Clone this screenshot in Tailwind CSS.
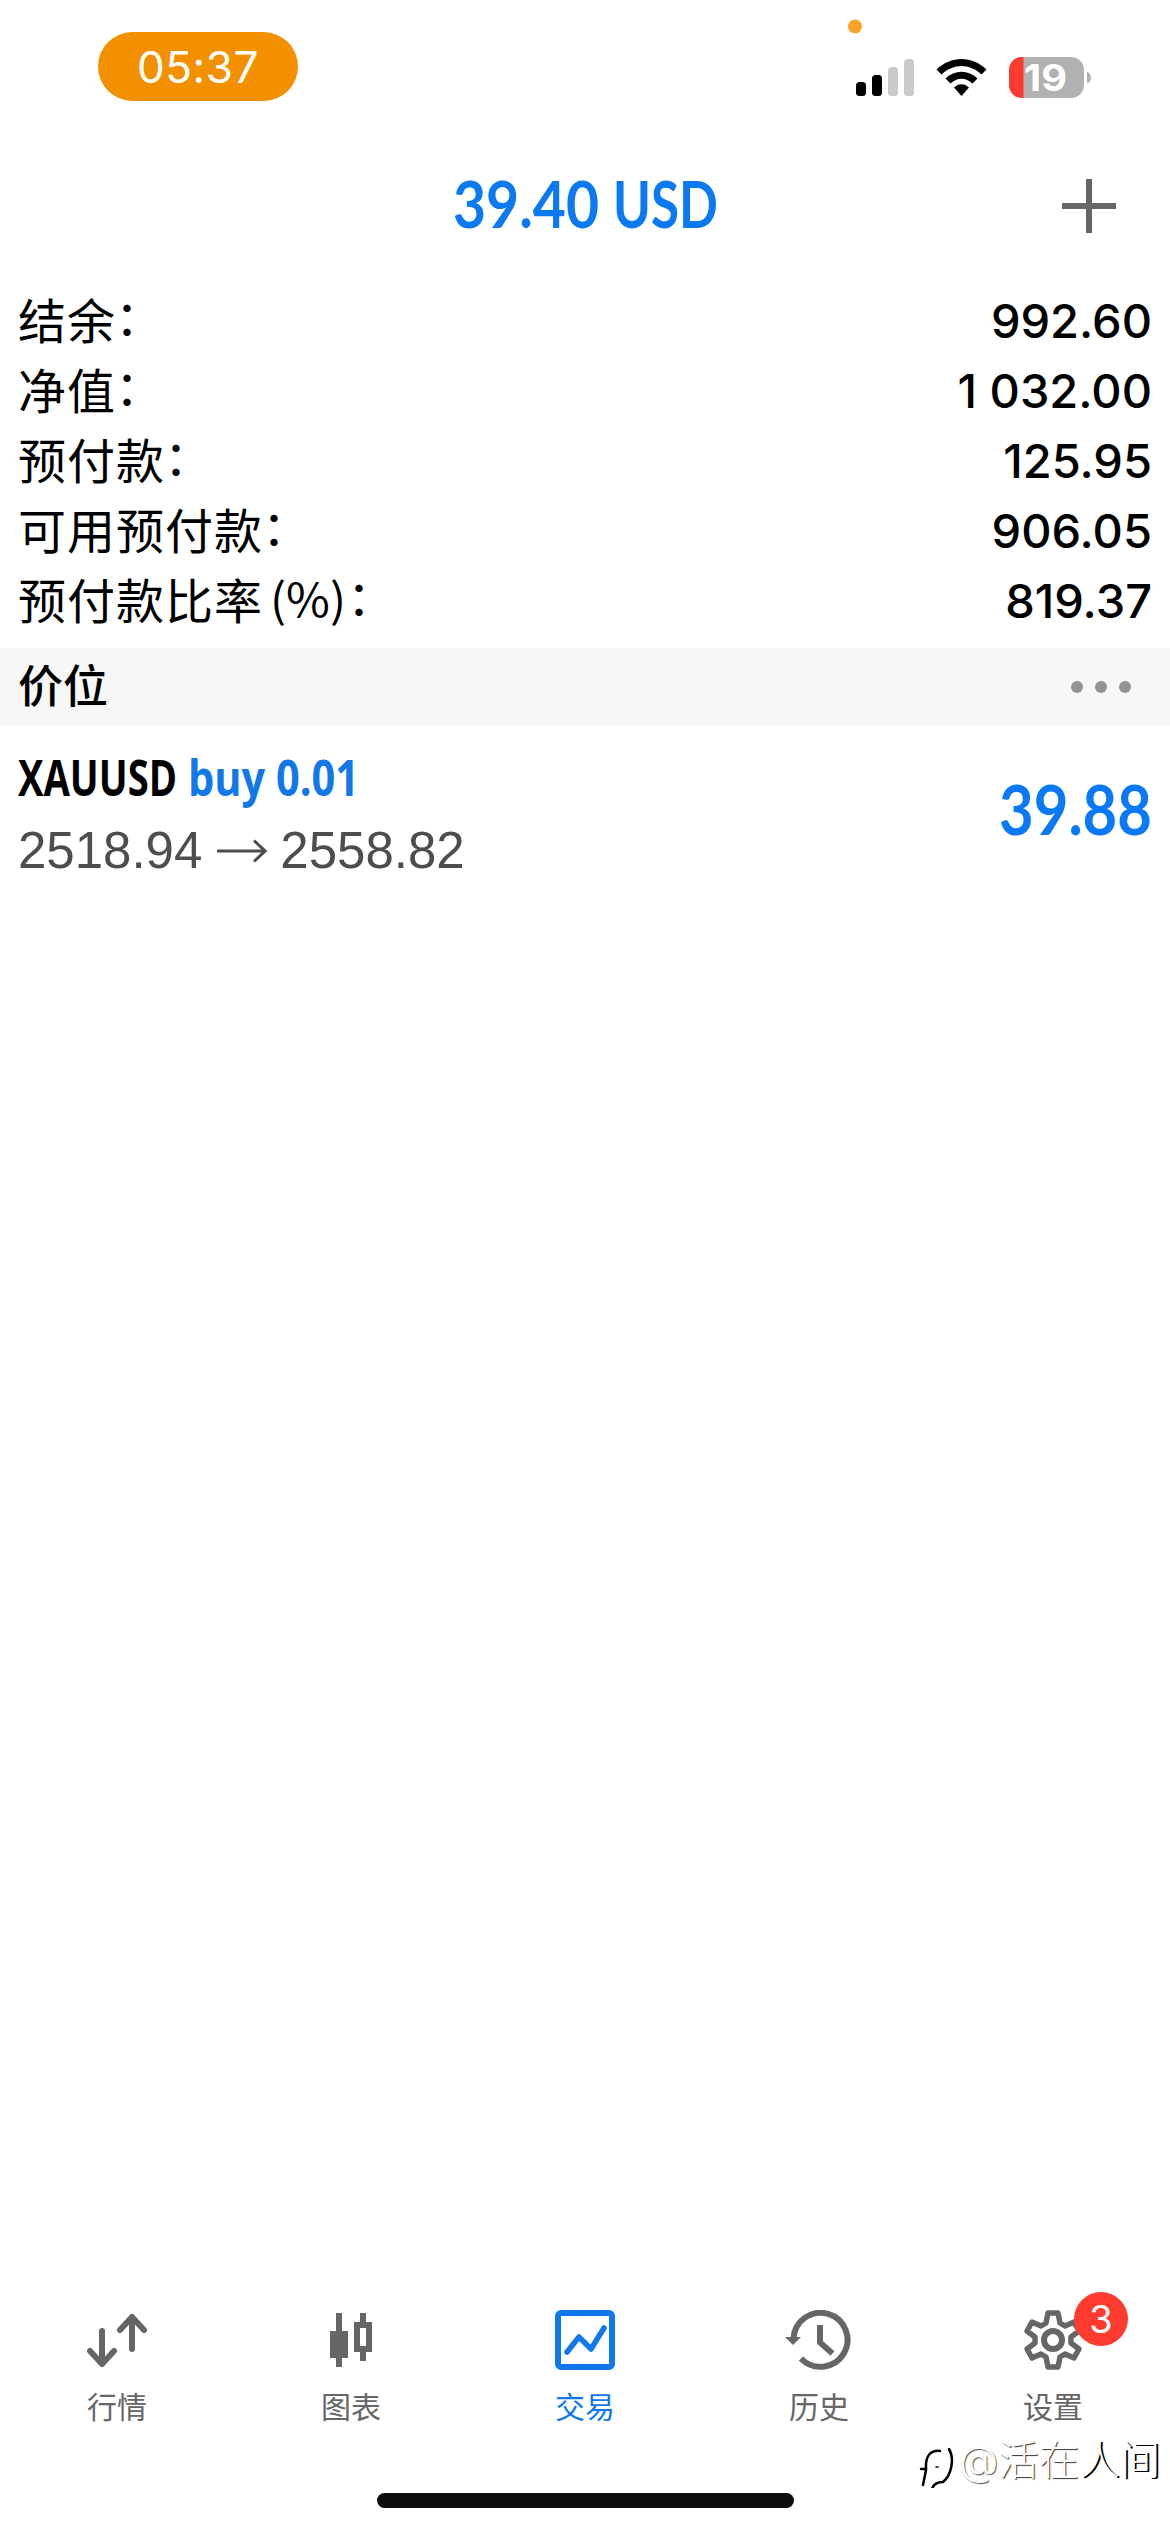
<!DOCTYPE html>
<html lang="zh-CN">
<head>
<meta charset="utf-8">
<title>交易</title>
<script src="https://cdn.jsdelivr.net/npm/@tailwindcss/browser@4"></script>
</head>
<body class="bg-white">
<div class="relative flex h-[2532px] w-[1170px] flex-col overflow-hidden bg-white font-['Inter','Noto_Sans_CJK_SC',sans-serif] text-black">
  <!-- status bar -->
  <header class="flex h-[140px] items-start justify-between pr-[78px] pl-[98px]">
    <div class="mt-8 flex h-[69px] w-[200px] items-center justify-center rounded-full bg-[#f39000] text-[44px] tracking-[0.5px] text-white">05:37</div>
    <svg class="h-[120px] w-[252px]" viewBox="840 0 252 120">
      <circle cx="855" cy="26.500" r="7" fill="#fda329"/>
      <rect x="856" y="82" width="10" height="14" rx="3.500"/>
      <rect x="872" y="75" width="10" height="21" rx="3.500"/>
      <rect x="888" y="67" width="10" height="29" rx="3.500" fill="#cbcbcb"/>
      <rect x="904" y="59" width="10" height="37" rx="3.500" fill="#cbcbcb"/>
      <path d="M936.500 69.500C951 55.500 972 55.500 986.500 69.500L981.500 74.500C969.500 63 953.500 63 941.500 74.500ZM945.500 78.500C954.500 69.500 968.500 69.500 977.500 78.500L972.500 83.500C966 77 957 77 950.500 83.500ZM954 87.500C958.500 83 964.500 83 969 87.500L961.500 96Z"/>
      <clipPath id="battery"><rect x="1009" y="57" width="75" height="41" rx="13"/></clipPath>
      <g clip-path="url(#battery)"><rect x="1009" y="57" width="75" height="41" fill="#b1b1b1"/><rect x="1009" y="57" width="14.500" height="41" fill="#ff3b30"/></g>
      <path d="M1087 71.500Q1091 73.500 1091 77.500T1087 83.500Z" fill="#b1b1b1"/>
      <text x="1024" y="91" font-size="37" font-weight="700" fill="#fff" textLength="43" lengthAdjust="spacingAndGlyphs">19</text>
    </svg>
  </header>

  <!-- title -->
  <div class="flex h-[146px] items-start justify-between pr-[54px] pl-[443px]">
    <svg class="h-[130px] w-[284px]" viewBox="-10 0 284 130" font-family="Lato" font-weight="700" font-size="65" fill="#0a79f2">
      <text x="0" y="88" textLength="146" lengthAdjust="spacingAndGlyphs">39.40</text>
      <text x="160" y="88" textLength="105" lengthAdjust="spacingAndGlyphs">USD</text>
    </svg>
    <svg class="mt-[39px] h-[54px] w-[54px]" viewBox="0 0 54 54"><path d="M27 0V54M0 27H54" stroke="#666" stroke-width="6"/></svg>
  </div>

  <!-- account summary -->
  <section class="flex h-[362px] flex-col pr-[18px] pl-[18px]">
    <div class="flex h-[70px] items-center justify-between"><span class="flex pt-px text-[48px] tracking-[1px]">结余<span class="-mt-[4px] -ml-[1px]">：</span></span><span class="text-[47px] font-medium">992.60</span></div>
    <div class="flex h-[70px] items-center justify-between"><span class="flex pt-px text-[48px] tracking-[1px]">净值<span class="-mt-[4px] -ml-[1px]">：</span></span><span class="text-[47px] font-medium">1 032.00</span></div>
    <div class="flex h-[70px] items-center justify-between"><span class="flex pt-px text-[48px] tracking-[1px]">预付款<span class="-mt-[4px] -ml-[1px]">：</span></span><span class="text-[47px] font-medium">125.95</span></div>
    <div class="flex h-[70px] items-center justify-between"><span class="flex pt-px text-[48px] tracking-[1px]">可用预付款<span class="-mt-[4px] -ml-[1px]">：</span></span><span class="text-[47px] font-medium">906.05</span></div>
    <div class="flex h-[70px] items-center justify-between"><span class="flex pt-px text-[48px] tracking-[1px]">预付款比率<svg class="h-[70px] w-[86px]" viewBox="0 0 86 70"><text x="7" y="51" font-family="Noto Sans CJK SC" font-size="46" font-weight="400" letter-spacing="0" textLength="76" lengthAdjust="spacingAndGlyphs">(%)</text></svg><span class="-mt-[4px] -ml-[2px]">：</span></span><span class="text-[47px] font-medium">819.37</span></div>
  </section>

  <!-- positions -->
  <div class="flex h-[77px] items-center justify-between bg-[#f7f7f7] pr-[39px] pl-[18px]">
    <h2 class="pt-px text-[45px] font-medium">价位</h2>
    <div class="flex gap-3"><i class="size-3 rounded-full bg-[#929292]"></i><i class="size-3 rounded-full bg-[#929292]"></i><i class="size-3 rounded-full bg-[#929292]"></i></div>
  </div>
  <div class="flex h-[160px] items-start justify-between pr-[8px] pl-[18px]">
    <div class="flex flex-col">
      <div class="flex">
        <svg class="h-[90px] w-[165px]" viewBox="0 0 165 90"><text x="0" y="71" font-family="Open Sans" font-weight="700" font-size="50" textLength="159" lengthAdjust="spacingAndGlyphs">XAUUSD</text></svg>
        <svg class="h-[90px] w-[185px]" viewBox="0 0 185 90"><text x="5" y="71" font-family="Open Sans" font-weight="700" font-size="50" fill="#1078e8" textLength="171" lengthAdjust="spacingAndGlyphs">buy 0.01</text></svg>
      </div>
      <div class="flex h-[72px] items-center font-['Liberation_Sans',sans-serif] text-[51px] text-[#4d4d4f]">
        <span>2518.94</span>
        <svg class="mr-[13px] ml-[15px] h-6 w-[50px]" viewBox="0 0 50 24" fill="none" stroke="#4d4d4f" stroke-width="3"><path d="M0 12H47M37 1.500L48 12L37 22.500"/></svg>
        <span>2558.82</span>
      </div>
    </div>
    <svg class="h-[150px] w-[172px]" viewBox="-10 0 172 150"><text x="-1" y="110" font-family="Lato" font-weight="700" font-size="69" fill="#0a79f8" textLength="153" lengthAdjust="spacingAndGlyphs">39.88</text></svg>
  </div>

  <main class="flex-1"></main>

  <!-- tab bar -->
  <nav class="grid h-[232px] grid-cols-5 text-[30px] text-[#666]">
    <div class="flex flex-col items-center pt-[10px]">
      <svg class="h-[60px] w-[60px]" viewBox="0 0 60 60" fill="none" stroke="#666" stroke-width="6" stroke-linecap="round" stroke-linejoin="round"><path d="M15 21V54M3 41L15 54L27 41M45 39V7M33 20L45 7L57 20"/></svg>
      <span class="mt-[15px]">行情</span>
    </div>
    <div class="flex flex-col items-center pt-[10px]">
      <svg class="h-[60px] w-[60px]" viewBox="0 0 60 60" fill="#666"><path d="M15 3H21V21H27V48H21V57H15V48H9V21H15ZM39 3H45V12H51V42H45V51H39V42H33V12H39ZM39 18V36H45V18Z" fill-rule="evenodd"/></svg>
      <span class="mt-[15px]">图表</span>
    </div>
    <div class="flex flex-col items-center pt-[10px] text-[#1078e8]">
      <svg class="h-[60px] w-[60px]" viewBox="0 0 60 60" fill="none" stroke="#1078e8" stroke-linejoin="round" stroke-linecap="round"><rect x="3" y="3" width="54" height="54" rx="3" stroke-width="6"/><path d="M12 42L24 27L36 39L49 18" stroke-width="5.500"/></svg>
      <span class="mt-[15px]">交易</span>
    </div>
    <div class="flex flex-col items-center pt-[10px]">
      <svg class="h-[60px] w-[68px]" viewBox="2 0 68 60" fill="none" stroke="#666" stroke-width="6"><path d="M10.500 29A27 27 0 1 1 18 48.500"/><path d="M37 15V32.500L49.500 43.500"/><path d="M2 27H18L10 35Z" fill="#666" stroke="none"/></svg>
      <span class="mt-[15px]">历史</span>
    </div>
    <div class="relative flex flex-col items-center pt-[10px]">
      <svg class="h-[60px] w-[60px]" viewBox="0 0 60 60" fill="none" stroke="#666" stroke-linejoin="round"><path d="M25 3H35L37 13L42 16L51 12L56 21L48 27V33L56 39L51 48L42 44L37 47L35 57H25L23 47L18 44L9 48L4 39L12 33V27L4 21L9 12L18 16L23 13Z" stroke-width="5.500"/><circle cx="30" cy="30" r="9" stroke-width="6"/></svg>
      <span class="mt-[15px]">设置</span>
      <span class="absolute top-[-8px] left-[138px] flex size-[54px] items-center justify-center rounded-full bg-[#ff3b30] text-[38px] text-white">3</span>
    </div>
  </nav>

  <!-- author mark -->
  <div class="absolute top-[2434px] left-[918px] flex items-center text-[40.500px] leading-[48px] font-light text-white">
    <svg class="h-[54px] w-[41px]" viewBox="0 -3 41 54" fill="none" stroke="#000" stroke-linecap="round"><path d="M3 32H8C7 17 14 13 22 14M8 33L5 48" stroke-width="2.500"/><path d="M31 12C37 22 33 39 25 45Q16 45 14 52" stroke-width="2.500"/><path d="M18 30H20" stroke-width="1.500"/></svg>
    <span class="[text-shadow:1px_1px_1px_#555]">@</span>
    <span class="[text-shadow:1px_1px_1px_#333]">活在</span>
    <span class="[text-shadow:2px_1px_0px_#000]">人间</span>
  </div>

  <!-- home indicator -->
  <div class="absolute top-[2493px] left-[377px] h-[15px] w-[417px] rounded-full bg-[#0d0d0d]"></div>
</div>
</body>
</html>
